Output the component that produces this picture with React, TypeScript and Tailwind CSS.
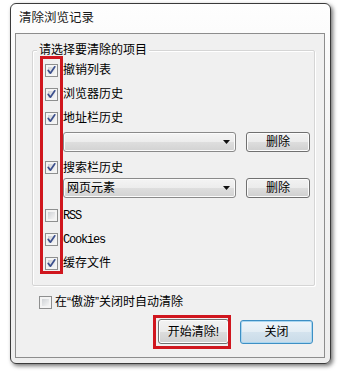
import React from "react";

function Cb({ checked }: { checked: boolean }) {
  return (
    <span className="relative w-[13px] h-[13px] shrink-0 border border-[#8e8f8f] bg-[#f4f4f4] p-[2px] flex">
      <span className="flex-1 bg-[linear-gradient(135deg,#cfd2d6,#f5f5f5)]" />
      {checked && (
        <svg className="absolute left-[-1px] top-[-1px]" width="13" height="13" viewBox="0 0 13 13">
          <path d="M3.2 6.4 L5.4 9.2 L9.8 2.8" fill="none" stroke="#3b4f8c" strokeWidth="1.7" strokeLinecap="round" strokeLinejoin="round" />
        </svg>
      )}
    </span>
  );
}

function Row({ checked, children, h = "h-[24px]", mt = "" }: { checked: boolean; children: React.ReactNode; h?: string; mt?: string }) {
  return (
    <div className={`flex items-center gap-[5px] ${h} ${mt}`}>
      <Cb checked={checked} />
      <span className="leading-none">{children}</span>
    </div>
  );
}

function Combo({ text }: { text?: string }) {
  return (
    <div className="w-[173px] h-[20px] rounded-[3px] border border-[#8a8a8a] bg-[linear-gradient(#f4f4f4_0%,#ececec_50%,#dedede_51%,#d2d2d2_100%)] shadow-[inset_0_0_0_1px_#fbfbfb] flex items-center pl-[3px] pr-[5px]">
      <span className="flex-1 leading-none">{text}</span>
      <svg width="7" height="4" viewBox="0 0 7 4">
        <path d="M0 0 H7 L3.5 4 Z" fill="#111" />
      </svg>
    </div>
  );
}

function Btn({ children, w, primary = false }: { children: React.ReactNode; w: string; primary?: boolean }) {
  return (
    <div
      className={`${w} flex items-center justify-center rounded-[3px] border leading-none ${
        primary
          ? "border-[#3d8fc4] bg-[linear-gradient(#eef5fa_0%,#e3edf4_50%,#d4e3ee_51%,#c9dbe8_100%)] shadow-[inset_0_0_0_1px_#a9d6f0]"
          : "border-[#707070] bg-[linear-gradient(#f2f2f2_0%,#ebebeb_50%,#dddddd_51%,#cfcfcf_100%)] shadow-[inset_0_0_0_1px_#fcfcfc]"
      }`}
    >
      {children}
    </div>
  );
}

export default function App() {
  const mono = "font-['Liberation_Mono',monospace] tracking-[-1.2px]";
  return (
    <div className="relative w-[343px] h-[371px] bg-white overflow-hidden text-[12px] text-black font-['Liberation_Sans','Noto_Sans_CJK_SC',sans-serif]">
      <div className="ml-[10px] mt-[3px] w-[321px] h-[361px] rounded-[6px] border border-[#3a3a3a] shadow-[2px_2px_4px_rgba(0,0,0,0.55)] bg-[linear-gradient(#fefefe,#f3f3f3_40%,#eeeeee)] flex flex-col pl-[4px] pr-[5px] pb-[5px]">
        <div className="h-[29px] shrink-0 flex items-center pl-[4px] text-[12.5px] text-[#1a1a1a]">清除浏览记录</div>
        <div className="flex-1 border border-[#8d8d8d] bg-[#f0f0f0] flex flex-col">
          {/* group box */}
          <div className="relative ml-[16px] mt-[16px] w-[283px] h-[236px] shrink-0 border border-[#d5d5d5] shadow-[inset_1px_1px_0_#ffffff,1px_1px_0_#ffffff] rounded-[2px]">
            <span className="absolute left-[4px] top-[-8px] bg-[#f0f0f0] px-[2px] leading-[14px]">请选择要清除的项目</span>
            <div className="flex flex-col pl-[12px] pt-[7px]">
              <Row checked>撤销列表</Row>
              <Row checked>浏览器历史</Row>
              <Row checked>地址栏历史</Row>
              <div className="flex items-center gap-[10px] mt-[2px] pl-[18px]">
                <Combo />
                <Btn w="w-[64px] h-[20px]">删除</Btn>
              </div>
              <Row checked h="h-[21px]" mt="mt-[5px]">搜索栏历史</Row>
              <div className="flex items-center gap-[10px] pl-[18px]">
                <Combo text="网页元素" />
                <Btn w="w-[64px] h-[20px]">删除</Btn>
              </div>
              <Row checked={false} mt="mt-[5px]"><span className={mono}>RSS</span></Row>
              <Row checked><span className={mono}>Cookies</span></Row>
              <Row checked>缓存文件</Row>
            </div>
          </div>
          <div className="flex items-center gap-[3px] h-[22px] mt-[5px] pl-[23px]">
            <Cb checked={false} />
            <span className="leading-none">在“傲游”关闭时自动清除</span>
          </div>
          <div className="flex justify-end items-center gap-[11px] mt-[6px] pr-[11px]">
            <Btn w="w-[71px] h-[25px]">开始清除!</Btn>
            <Btn w="w-[73px] h-[24px]" primary>关闭</Btn>
          </div>
        </div>
      </div>
      {/* red annotation frames */}
      <div className="absolute left-[40px] top-[56px] w-[23px] h-[218px] border-[3px] border-[#d0161e]" />
      <div className="absolute left-[153px] top-[315px] w-[78px] h-[34px] border-[3px] border-[#d0161e]" />
    </div>
  );
}
